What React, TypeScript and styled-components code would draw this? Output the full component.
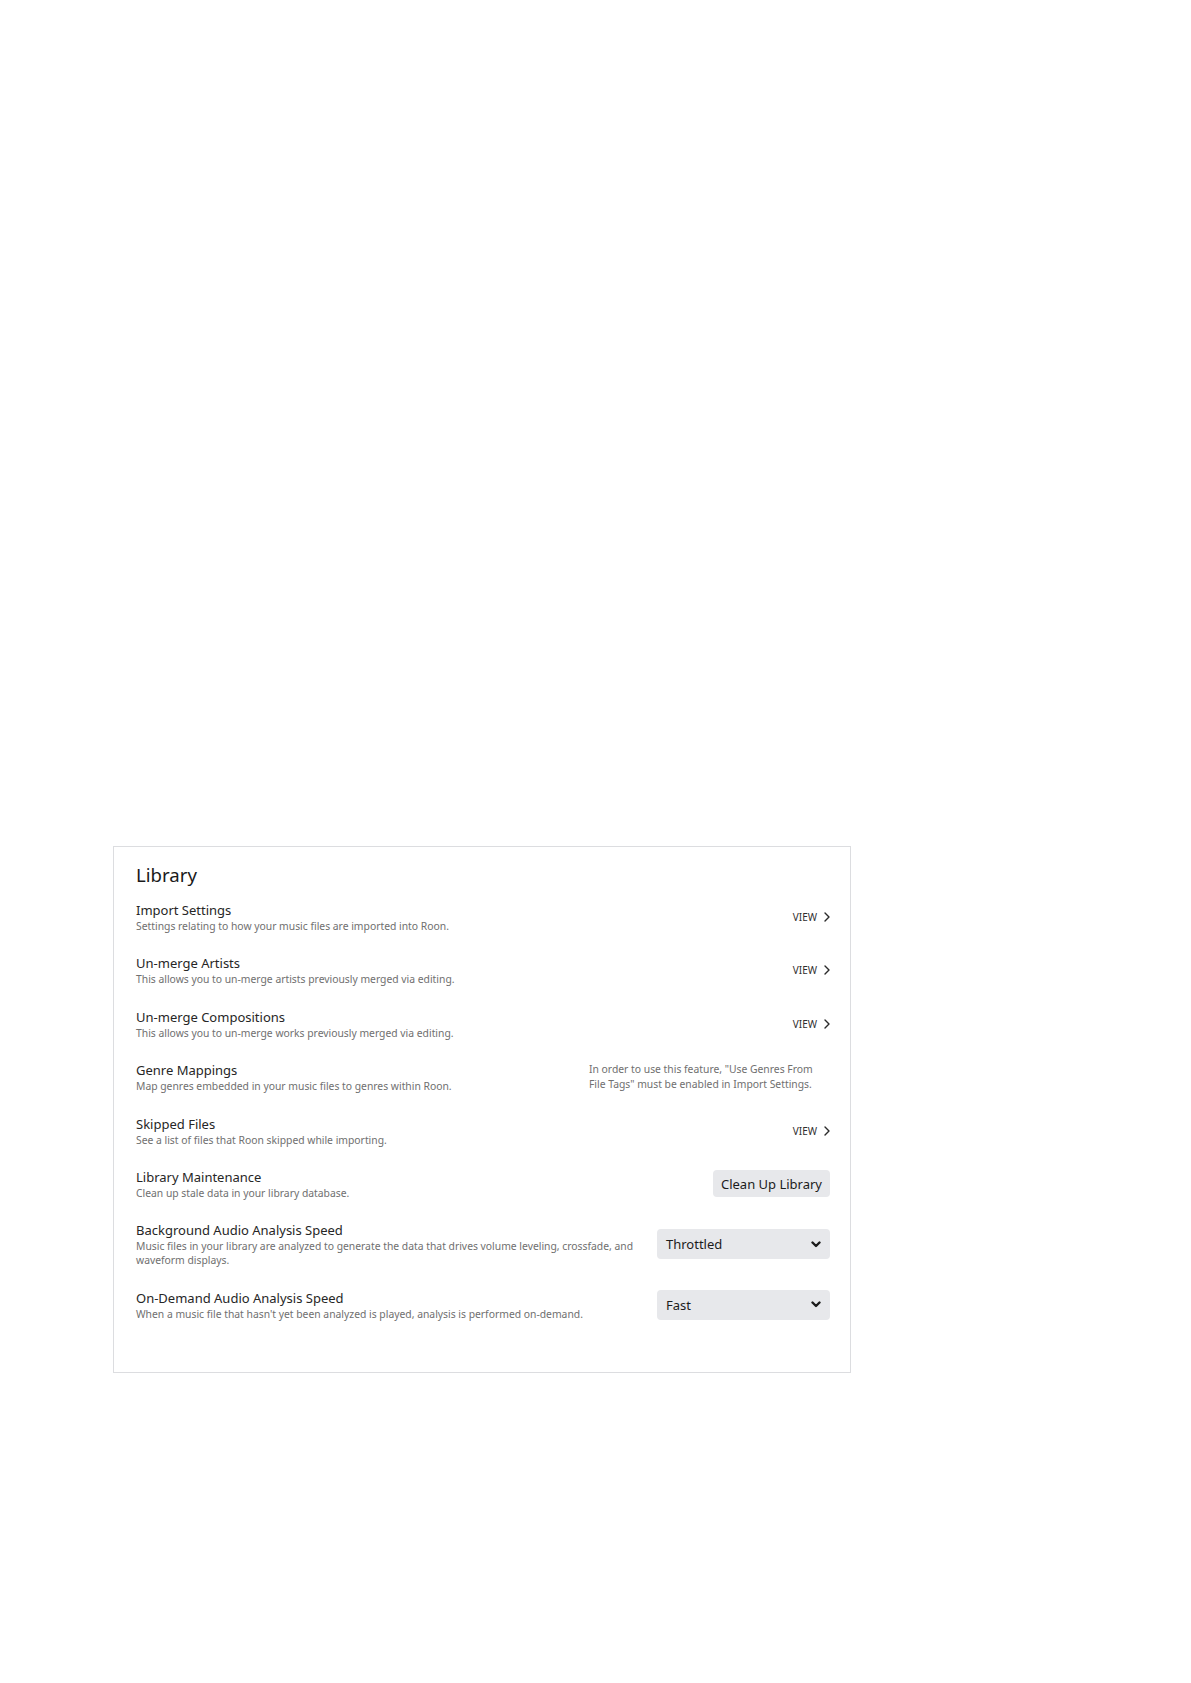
import React from 'react';
import styled, { createGlobalStyle } from 'styled-components';

const GlobalStyle = createGlobalStyle`
  html, body {
    margin: 0;
    padding: 0;
    background: #ffffff;
  }
  body {
    font-family: 'Noto Sans', 'Open Sans', sans-serif;
    color: #1f1f1f;
  }
`;

const Page = styled.div`
  min-height: 1683px;
  padding: 846px 0 0 113px;
  box-sizing: border-box;
`;

const Card = styled.section`
  width: 738px;
  box-sizing: border-box;
  border: 1px solid #dcdde0;
  background: #fff;
  padding: 14px 20px 51px 22px;
`;

const Heading = styled.h2`
  margin: 0 0 12px;
  font-size: 18.6px;
  line-height: 28px;
  font-weight: 400;
  color: #1a1a1a;
`;

const List = styled.div`
  display: flex;
  flex-direction: column;
  gap: 21.4px;
`;

const Row = styled.div`
  display: flex;
  align-items: center;
  gap: 12px;
`;

const Info = styled.div`
  flex: 1;
  min-width: 0;
`;

const Title = styled.div`
  font-size: 13px;
  line-height: 18px;
  color: #262626;
`;

const Description = styled.div`
  font-size: 10.35px;
  line-height: 14px;
  color: #707070;
`;

const Note = styled.div`
  width: 241px;
  font-size: 10.35px;
  line-height: 15px;
  color: #707070;
`;

const ViewLink = styled.a`
  display: flex;
  align-items: center;
  gap: 7px;
  font-size: 10px;
  line-height: 14px;
  text-transform: uppercase;
  color: #2e2e2e;
  text-decoration: none;
  cursor: pointer;
`;

const Button = styled.button`
  height: 27px;
  padding: 0 8px;
  border: none;
  border-radius: 4px;
  background: #e7e8eb;
  font-family: 'Noto Sans', 'Open Sans', sans-serif;
  font-size: 13px;
  color: #1c1c1c;
  cursor: pointer;
`;

const Select = styled.button`
  width: 173px;
  height: 30px;
  flex-shrink: 0;
  display: flex;
  align-items: center;
  justify-content: space-between;
  padding: 0 9px;
  border: none;
  border-radius: 4px;
  background: #e7e8eb;
  font-family: 'Noto Sans', 'Open Sans', sans-serif;
  font-size: 13px;
  color: #1c1c1c;
  cursor: pointer;
`;

const ChevronRight = () => (
  <svg width="6" height="10" viewBox="0 0 6 10" fill="none">
    <polyline points="1,1 5,5 1,9" stroke="#2a2a2a" strokeWidth="1.4" strokeLinecap="round" strokeLinejoin="round" />
  </svg>
);

const ChevronDown = () => (
  <svg width="10" height="7" viewBox="0 0 10 7" fill="none">
    <polyline points="1.5,1.5 5,5 8.5,1.5" stroke="#1c1c1c" strokeWidth="2.4" strokeLinecap="round" strokeLinejoin="round" />
  </svg>
);

const View = () => (
  <ViewLink>
    View
    <ChevronRight />
  </ViewLink>
);

const App: React.FC = () => {
  return (
    <Page>
      <GlobalStyle />
      <Card>
        <Heading>Library</Heading>
        <List>
          <Row>
            <Info>
              <Title>Import Settings</Title>
              <Description>Settings relating to how your music files are imported into Roon.</Description>
            </Info>
            <View />
          </Row>
          <Row>
            <Info>
              <Title>Un-merge Artists</Title>
              <Description>This allows you to un-merge artists previously merged via editing.</Description>
            </Info>
            <View />
          </Row>
          <Row>
            <Info>
              <Title>Un-merge Compositions</Title>
              <Description>This allows you to un-merge works previously merged via editing.</Description>
            </Info>
            <View />
          </Row>
          <Row>
            <Info>
              <Title>Genre Mappings</Title>
              <Description>Map genres embedded in your music files to genres within Roon.</Description>
            </Info>
            <Note>
              In order to use this feature, "Use Genres From
              <br />
              File Tags" must be enabled in Import Settings.
            </Note>
          </Row>
          <Row>
            <Info>
              <Title>Skipped Files</Title>
              <Description>See a list of files that Roon skipped while importing.</Description>
            </Info>
            <View />
          </Row>
          <Row>
            <Info>
              <Title>Library Maintenance</Title>
              <Description>Clean up stale data in your library database.</Description>
            </Info>
            <Button>Clean Up Library</Button>
          </Row>
          <Row>
            <Info>
              <Title>Background Audio Analysis Speed</Title>
              <Description>
                Music files in your library are analyzed to generate the data that drives volume leveling, crossfade, and
                waveform displays.
              </Description>
            </Info>
            <Select>
              Throttled
              <ChevronDown />
            </Select>
          </Row>
          <Row>
            <Info>
              <Title>On-Demand Audio Analysis Speed</Title>
              <Description>When a music file that hasn't yet been analyzed is played, analysis is performed on-demand.</Description>
            </Info>
            <Select>
              Fast
              <ChevronDown />
            </Select>
          </Row>
        </List>
      </Card>
    </Page>
  );
};

export default App;
